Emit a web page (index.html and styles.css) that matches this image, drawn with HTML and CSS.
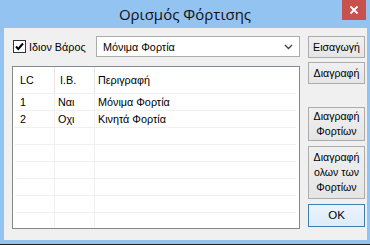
FILE: index.html
```html
<!DOCTYPE html>
<html>
<head>
<meta charset="utf-8">
<link rel="stylesheet" href="styles.css">
</head>
<body>
<div class="window">
  <div class="titlebar">
    <span class="title">Ορισμός Φόρτισης</span>
    <div class="close"><svg width="10" height="10" viewBox="0 0 10 10"><path d="M1.5 1.5 L8.5 8.5 M8.5 1.5 L1.5 8.5" stroke="#fff" stroke-width="1.8"/></svg></div>
  </div>
  <div class="content">
    <div class="main">
      <div class="toprow">
        <label class="chk">
          <span class="box"><svg width="11" height="11" viewBox="0 0 11 11"><path d="M2 5.5 L4.3 8 L9 2.5" fill="none" stroke="#000" stroke-width="2"/></svg></span>
          <span>Ιδιον Βάρος</span>
        </label>
        <div class="combo">
          <span>Μόνιμα Φορτία</span>
          <svg class="chev" width="9" height="6" viewBox="0 0 9 6"><path d="M1 1 L4.5 4.5 L8 1" fill="none" stroke="#444" stroke-width="1.4"/></svg>
        </div>
      </div>
      <div class="list">
        <table class="grid">
          <thead>
            <tr><th class="c1">LC</th><th class="c2">I.B.</th><th class="c3">Περιγραφή</th></tr>
          </thead>
          <tbody>
            <tr><td>1</td><td>Ναι</td><td>Μόνιμα Φορτία</td></tr>
            <tr><td>2</td><td>Οχι</td><td>Κινητά Φορτία</td></tr>
            <tr><td></td><td></td><td></td></tr>
            <tr><td></td><td></td><td></td></tr>
            <tr><td></td><td></td><td></td></tr>
            <tr><td></td><td></td><td></td></tr>
            <tr><td></td><td></td><td></td></tr>
            <tr><td></td><td></td><td></td></tr>
          </tbody>
        </table>
      </div>
    </div>
    <div class="side">
      <button class="btn b1">Εισαγωγή</button>
      <button class="btn b2">Διαγραφή</button>
      <button class="btn b3">Διαγραφή<br>Φορτίων</button>
      <button class="btn b4">Διαγραφή<br>ολων των<br>Φορτίων</button>
      <button class="btn ok">OK</button>
    </div>
  </div>
</div>
</body>
</html>
```

FILE: styles.css
```css
html, body {
  margin: 0;
  padding: 0;
  width: 370px;
  height: 245px;
  overflow: hidden;
  background: #1e1e1e;
}
.window {
  width: 370px;
  height: 244px;
  background: #92c3f1;
  display: flex;
  flex-direction: column;
  font-family: "Liberation Sans", Arial, sans-serif;
  font-size: 10.8px;
  color: #000;
}
.titlebar {
  height: 28px;
  display: flex;
  justify-content: center;
  position: relative;
}
.title {
  font-family: "Open Sans", "Noto Sans", sans-serif;
  font-size: 15px;
  line-height: 28px;
  color: #111;
}
.close {
  position: absolute;
  left: 342px;
  top: 0;
  width: 24px;
  height: 20px;
  background: #c8514d;
  display: flex;
  align-items: center;
  justify-content: center;
}
.content {
  flex: 1;
  margin: 0 3px 4px 4px;
  background: #f0f0f0;
  display: flex;
  gap: 8px;
  padding: 8px 2px 0 8px;
}
.main {
  width: 288px;
  display: flex;
  flex-direction: column;
}
.toprow {
  height: 21px;
  display: flex;
  align-items: center;
}
.chk {
  display: flex;
  align-items: center;
  gap: 3px;
  width: 84px;
  padding-left: 1px;
  box-sizing: border-box;
}
.box {
  width: 11px;
  height: 11px;
  border: 1px solid #333;
  background: #fff;
  display: flex;
}
.combo {
  flex: 1;
  height: 21px;
  box-sizing: border-box;
  border: 1px solid #acacac;
  background: #fff;
  display: flex;
  align-items: center;
  justify-content: space-between;
  padding: 0 6px 0 6px;
}
.list {
  margin-top: 9px;
  height: 163px;
  box-sizing: border-box;
  border: 1px solid #828790;
  background: #fff;
  padding: 0 3px 5px 2px;
  overflow: hidden;
}
.grid {
  border-collapse: collapse;
  width: 100%;
  table-layout: fixed;
}
.grid th {
  font-weight: normal;
  text-align: left;
  height: 26px;
  padding: 0 0 0 5px;
  border-right: 1px solid #e5e5e5;
  border-bottom: 1px solid #f0f0f0;
}
.grid td {
  height: 16px;
  padding: 0 0 0 5px;
  border-right: 1px solid #f0f0f0;
  border-bottom: 1px solid #f0f0f0;
  white-space: nowrap;
}
.grid th:last-child, .grid td:last-child { border-right: none; }
.c1 { width: 34px; }
.c2 { width: 34px; }
.grid td:nth-child(2) { padding-left: 3px; }
.grid td:nth-child(3), .grid th:nth-child(3) { padding-left: 3px; }
.side {
  width: 57px;
  display: flex;
  flex-direction: column;
}
.btn {
  font-family: "Liberation Sans", Arial, sans-serif;
  font-size: 10.6px;
  color: #000;
  background: linear-gradient(#f0f0f0, #e5e5e5);
  border: 1px solid #acacac;
  padding: 0;
  width: 57px;
  line-height: 15px;
}
.b1 { height: 22px; margin-top: 0; }
.b2 { height: 22px; margin-top: 4px; }
.b3 { height: 34px; margin-top: 23px; }
.b4 { height: 53px; margin-top: 5px; }
.ok {
  height: 23px;
  margin-top: 5px;
  border-color: #3c7fb1;
  background: linear-gradient(#ecf4fc, #dcecfc);
  font-size: 11.5px;
}
```
